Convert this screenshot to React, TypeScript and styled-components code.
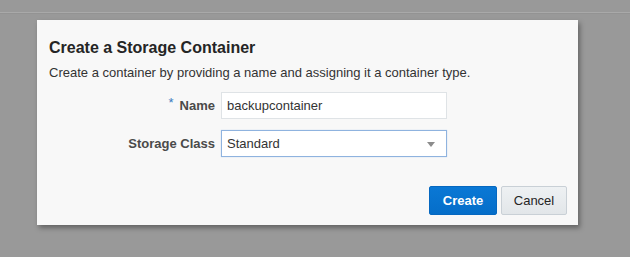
import * as React from "react";
import styled, { createGlobalStyle } from "styled-components";

const GlobalStyle = createGlobalStyle`
  html, body {
    margin: 0;
    padding: 0;
    background: #999999;
    font-family: "Liberation Sans", Arial, sans-serif;
  }
`;

const Page = styled.div`
  width: 630px;
  height: 257px;
  overflow: hidden;
  background: #999999;
`;

const TopStrip = styled.div`
  height: 12px;
  border-bottom: 1px solid #a9a9a9;
  box-shadow: 0 1px 0 #939393;
`;

const Dialog = styled.div`
  margin: 7px 0 0 37px;
  width: 541px;
  height: 205px;
  box-sizing: border-box;
  background: #f8f8f8;
  box-shadow: 2px 3px 5px rgba(0, 0, 0, 0.35);
  padding: 19px 11px 10px 12px;
  display: flex;
  flex-direction: column;
`;

const Title = styled.h1`
  margin: 0;
  font-size: 16px;
  font-weight: bold;
  color: #252525;
  line-height: 18px;
`;

const Subtitle = styled.p`
  margin: 8px 0 0;
  font-size: 13px;
  color: #333333;
  line-height: 15px;
`;

const Form = styled.div`
  margin-top: 12px;
  display: grid;
  grid-template-columns: 166px 226px;
  column-gap: 6px;
  row-gap: 11px;
  align-items: center;
`;

const Label = styled.label`
  text-align: right;
  font-size: 13px;
  font-weight: bold;
  color: #4a4a4a;
`;

const Required = styled.span`
  color: #3a7bc0;
  font-weight: normal;
  font-size: 13px;
  margin-right: 6px;
  position: relative;
  top: -3px;
`;

const Field = styled.div<{ $focused?: boolean }>`
  height: 27px;
  box-sizing: border-box;
  background: #ffffff;
  border: 1px solid ${p => (p.$focused ? "#8fb3df" : "#dfe3e6")};
  box-shadow: ${p => (p.$focused ? "0 0 1px #b8d0ec" : "none")};
  display: flex;
  align-items: center;
  padding: 0 11px 0 5px;
  font-size: 13px;
  color: #333333;
`;

const Value = styled.span`
  flex: 1;
`;

const Arrow = styled.span`
  width: 0;
  height: 0;
  border-left: 4px solid transparent;
  border-right: 4px solid transparent;
  border-top: 5px solid #8c8c8c;
  margin-top: 2px;
`;

const Footer = styled.div`
  margin-top: auto;
  display: flex;
  justify-content: flex-end;
  gap: 4px;
`;

const Button = styled.button<{ $primary?: boolean }>`
  height: 29px;
  width: ${p => (p.$primary ? "68px" : "66px")};
  box-sizing: border-box;
  padding: 0;
  font-family: "Liberation Sans", Arial, sans-serif;
  font-size: 13px;
  font-weight: ${p => (p.$primary ? "bold" : "normal")};
  color: ${p => (p.$primary ? "#ffffff" : "#252525")};
  background: ${p =>
    p.$primary
      ? "linear-gradient(#0a78d5, #056ec9)"
      : "linear-gradient(#eef1f3, #e2e6e9)"};
  border: 1px solid ${p => (p.$primary ? "#0668c0" : "#c9d0d6")};
  border-radius: 2px;
  cursor: pointer;
`;

export default function App() {
  return (
    <Page>
      <GlobalStyle />
      <TopStrip />
      <Dialog>
        <Title>Create a Storage Container</Title>
        <Subtitle>
          Create a container by providing a name and assigning it a container type.
        </Subtitle>
        <Form>
          <Label>
            <Required>*</Required>Name
          </Label>
          <Field>
            <Value>backupcontainer</Value>
          </Field>
          <Label>Storage Class</Label>
          <Field $focused>
            <Value>Standard</Value>
            <Arrow />
          </Field>
        </Form>
        <Footer>
          <Button $primary>Create</Button>
          <Button>Cancel</Button>
        </Footer>
      </Dialog>
    </Page>
  );
}
